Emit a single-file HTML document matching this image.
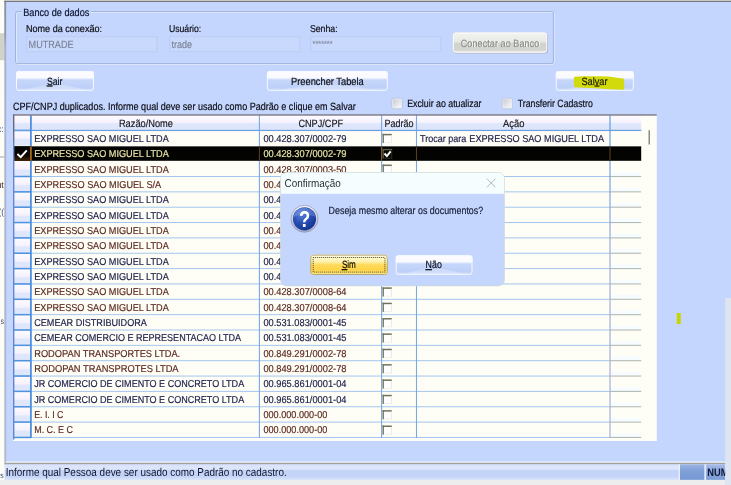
<!DOCTYPE html>
<html><head><meta charset="utf-8"><title>Confirmação</title>
<style>html,body{margin:0;padding:0;background:#c4d6fd;}body{width:731px;height:485px;overflow:hidden;position:relative;font-family:"Liberation Sans",sans-serif;}</style>
</head><body>
<svg width="737" height="491" viewBox="-3 -3 737 491" font-family="Liberation Sans, sans-serif" text-rendering="geometricPrecision" xml:space="preserve" style="display:block;position:absolute;left:-3px;top:-3px;filter:blur(0.45px)"><defs><linearGradient id="g1" x1="0" y1="0" x2="0" y2="1"><stop offset="0" stop-color="#6c6d72"/><stop offset="0.07" stop-color="#74757c"/><stop offset="0.1" stop-color="#a0a0b2"/><stop offset="1" stop-color="#aeaeb4"/></linearGradient><linearGradient id="g2" x1="0" y1="0" x2="0" y2="1"><stop offset="0" stop-color="#f3f4f0"/><stop offset="0.45" stop-color="#e7e9e4"/><stop offset="0.55" stop-color="#d1d4ce"/><stop offset="0.85" stop-color="#d2d5d0"/><stop offset="1" stop-color="#e9ebe7"/></linearGradient><linearGradient id="g3" x1="0" y1="0" x2="0" y2="1"><stop offset="0" stop-color="#fdfcff"/><stop offset="0.33" stop-color="#f9faff"/><stop offset="0.45" stop-color="#c6d7fa"/><stop offset="0.82" stop-color="#bdd0f8"/><stop offset="1" stop-color="#d0defc"/></linearGradient><linearGradient id="g4" x1="0" y1="0" x2="0" y2="1"><stop offset="0" stop-color="#fdfcff"/><stop offset="0.33" stop-color="#f9faff"/><stop offset="0.45" stop-color="#c6d7fa"/><stop offset="0.82" stop-color="#bdd0f8"/><stop offset="1" stop-color="#d0defc"/></linearGradient><linearGradient id="g5" x1="0" y1="0" x2="0" y2="1"><stop offset="0" stop-color="#fdfcff"/><stop offset="0.33" stop-color="#f9faff"/><stop offset="0.45" stop-color="#c6d7fa"/><stop offset="0.82" stop-color="#bdd0f8"/><stop offset="1" stop-color="#d0defc"/></linearGradient><linearGradient id="g6" x1="0" y1="0" x2="1" y2="1"><stop offset="0" stop-color="#c2c4c8"/><stop offset="0.5" stop-color="#e2e3e6"/><stop offset="1" stop-color="#fcfcfc"/></linearGradient><linearGradient id="g7" x1="0" y1="0" x2="1" y2="1"><stop offset="0" stop-color="#c2c4c8"/><stop offset="0.5" stop-color="#e2e3e6"/><stop offset="1" stop-color="#fcfcfc"/></linearGradient><linearGradient id="g8" x1="0" y1="0" x2="0" y2="1"><stop offset="0" stop-color="#fefbff"/><stop offset="0.46" stop-color="#f7f3fe"/><stop offset="0.56" stop-color="#dfe7fc"/><stop offset="1" stop-color="#dce5fb"/></linearGradient><linearGradient id="g9" x1="0" y1="0" x2="0" y2="1"><stop offset="0" stop-color="#fefbff"/><stop offset="0.5" stop-color="#f5f2fe"/><stop offset="0.6" stop-color="#dfe7fc"/><stop offset="1" stop-color="#dde6fc"/></linearGradient><linearGradient id="g10" x1="0" y1="0" x2="0" y2="1"><stop offset="0" stop-color="#5f9be2"/><stop offset="0.2" stop-color="#7aa4e0"/><stop offset="0.45" stop-color="#a2add6"/><stop offset="1" stop-color="#a8b0d4"/></linearGradient><linearGradient id="g11" x1="0" y1="0" x2="0" y2="1"><stop offset="0" stop-color="#020100"/><stop offset="0.55" stop-color="#070300"/><stop offset="1" stop-color="#3c2405"/></linearGradient><linearGradient id="g12" x1="0" y1="0" x2="0" y2="1"><stop offset="0" stop-color="#6b687c"/><stop offset="0.06" stop-color="#6b6a84"/><stop offset="0.1" stop-color="#6687cc"/><stop offset="1" stop-color="#6285cc"/></linearGradient><linearGradient id="g13" x1="0" y1="0" x2="0" y2="1"><stop offset="0" stop-color="#d9e3fb"/><stop offset="0.3" stop-color="#dde6fc"/><stop offset="0.42" stop-color="#c2d3f8"/><stop offset="0.8" stop-color="#c4d5f9"/><stop offset="1" stop-color="#dbe5fb"/></linearGradient><linearGradient id="g14" x1="0" y1="0" x2="0" y2="1"><stop offset="0" stop-color="#9ab3e3"/><stop offset="0.45" stop-color="#7f9fd8"/><stop offset="1" stop-color="#7699d4"/></linearGradient><linearGradient id="g15" x1="0" y1="0" x2="0" y2="1"><stop offset="0" stop-color="#a7bce8"/><stop offset="0.45" stop-color="#8aa7dc"/><stop offset="1" stop-color="#7c9cd6"/></linearGradient><linearGradient id="g16" x1="0" y1="0" x2="0" y2="1"><stop offset="0" stop-color="#f6f8fd"/><stop offset="1" stop-color="#a4aecb"/></linearGradient><radialGradient id="g17" cx="0.36" cy="0.28" r="0.85" ><stop offset="0" stop-color="#5a82d8"/><stop offset="0.45" stop-color="#2a52b6"/><stop offset="1" stop-color="#0d2d8a"/></radialGradient><linearGradient id="g18" x1="0" y1="0" x2="0" y2="1"><stop offset="0" stop-color="#fffce4"/><stop offset="0.35" stop-color="#fff2ac"/><stop offset="0.5" stop-color="#ffdb5c"/><stop offset="0.75" stop-color="#ffd347"/><stop offset="1" stop-color="#ffea92"/></linearGradient><linearGradient id="g19" x1="0" y1="0" x2="0" y2="1"><stop offset="0" stop-color="#fdfcff"/><stop offset="0.33" stop-color="#f9faff"/><stop offset="0.45" stop-color="#c6d7fa"/><stop offset="0.82" stop-color="#bdd0f8"/><stop offset="1" stop-color="#d0defc"/></linearGradient></defs>
<rect x="-3" y="-3" width="737" height="491" fill="#c4d6fd"/>
<rect x="-3" y="-3" width="7.6" height="491" fill="#fdfdf8"/>
<rect x="-3" y="33.2" width="7.6" height="27" fill="#d0d3c9"/>
<rect x="-3" y="156.4" width="7.4" height="1.2" fill="#b4b4ac"/>
<text x="-2.5" y="131.5" font-size="9" fill="#3a5a9a" textLength="6.3" lengthAdjust="spacingAndGlyphs">c:</text>
<text x="-3.5" y="187.5" font-size="9" fill="#402828" textLength="7.3" lengthAdjust="spacingAndGlyphs">ut</text>
<text x="-1.5" y="214.5" font-size="9" fill="#404a7a" textLength="5.5" lengthAdjust="spacingAndGlyphs">((</text>
<text x="0.5" y="323.8" font-size="8.5" fill="#3a4060" textLength="3.5" lengthAdjust="spacingAndGlyphs">s</text>
<rect x="4.4" y="-3" width="731" height="3.9" fill="#d4d4cc"/>
<rect x="4.4" y="0.9" width="731" height="1.1" fill="#76777a"/>
<rect x="4.5" y="0.9" width="1.3" height="461.8" fill="url(#g1)"/>
<rect x="5.8" y="1.9" width="0.7" height="460" fill="#b2c6f6"/>
<rect x="725.2" y="298" width="9" height="190" fill="#dfe4f1"/>
<rect x="676.8" y="313" width="3.9" height="11" fill="#c8d400"/>
<rect x="16.4" y="12.5" width="537.9" height="52" fill="none" rx="2" stroke="#e0e9fe" stroke-width="1"/>
<rect x="15.5" y="11.6" width="537.9" height="52" fill="none" rx="2" stroke="#a2b3da" stroke-width="1"/>
<rect x="21.6" y="6" width="69.4" height="12" fill="#c4d6fd"/>
<text x="23.2" y="15.9" font-size="10.5" fill="#0b1232" stroke="#0b1232" stroke-width="0.18" textLength="66.2" lengthAdjust="spacingAndGlyphs">Banco de dados</text>
<text x="26" y="32.1" font-size="10" fill="#0c0c12" stroke="#0c0c12" stroke-width="0.18" textLength="76" lengthAdjust="spacingAndGlyphs">Nome da conexão:</text>
<text x="168.9" y="32.1" font-size="10" fill="#0c0c12" stroke="#0c0c12" stroke-width="0.18" textLength="32.4" lengthAdjust="spacingAndGlyphs">Usuário:</text>
<text x="309.9" y="32.1" font-size="10" fill="#0c0c12" stroke="#0c0c12" stroke-width="0.18" textLength="27.8" lengthAdjust="spacingAndGlyphs">Senha:</text>
<rect x="26.5" y="36.7" width="130.4" height="15" fill="#c9d9fd" stroke="#bccdf4" stroke-width="1"/>
<rect x="169.8" y="36.7" width="130.3" height="15" fill="#c9d9fd" stroke="#bccdf4" stroke-width="1"/>
<rect x="310.7" y="36.7" width="130.1" height="15" fill="#c9d9fd" stroke="#bccdf4" stroke-width="1"/>
<text x="28.6" y="47.8" font-size="10.5" fill="#7b8294" stroke="#7b8294" stroke-width="0.15" textLength="44.9" lengthAdjust="spacingAndGlyphs">MUTRADE</text>
<text x="171.6" y="47.8" font-size="10.5" fill="#7b8294" stroke="#7b8294" stroke-width="0.15" textLength="20.4" lengthAdjust="spacingAndGlyphs">trade</text>
<text x="312.6" y="46.9" font-size="9" fill="#858da0" stroke="#858da0" stroke-width="0.1" textLength="20" lengthAdjust="spacingAndGlyphs">*******</text>
<rect x="453.6" y="33.5" width="94.3" height="20.1" fill="#a9a9cb" rx="3"/>
<rect x="452.9" y="32.6" width="94.3" height="20.1" fill="url(#g2)" rx="3"/>
<rect x="453.4" y="33.1" width="93.3" height="19.1" fill="none" rx="2.6" stroke="#fbfbf2" stroke-width="1"/>
<text x="461.4" y="47.3" font-size="10.5" fill="#ffffff" stroke="#ffffff" stroke-width="0.2" textLength="78.7" lengthAdjust="spacingAndGlyphs">Conectar ao Banco</text>
<text x="460.7" y="46.6" font-size="10.5" fill="#8b8d89" stroke="#8b8d89" stroke-width="0.2" textLength="78.7" lengthAdjust="spacingAndGlyphs">Conectar ao Banco</text>
<rect x="16" y="71.1" width="77.9" height="19.7" fill="url(#g3)" rx="2.5"/>
<path d="M25.35 90 Q54.95 79.37 84.55 90 Z" fill="#dde8fe" opacity="0.55"/>
<rect x="16.5" y="71.6" width="76.9" height="18.7" fill="none" rx="2.2" stroke="#f6f9ff" stroke-width="1"/>
<rect x="266.9" y="71.1" width="120.9" height="19.7" fill="url(#g4)" rx="2.5"/>
<path d="M281.41 90 Q327.35 79.37 373.29 90 Z" fill="#dde8fe" opacity="0.55"/>
<rect x="267.4" y="71.6" width="119.9" height="18.7" fill="none" rx="2.2" stroke="#f6f9ff" stroke-width="1"/>
<rect x="555.8" y="71.1" width="78" height="19.7" fill="url(#g5)" rx="2.5"/>
<path d="M565.16 90 Q594.8 79.37 624.44 90 Z" fill="#dde8fe" opacity="0.55"/>
<rect x="556.3" y="71.6" width="77" height="18.7" fill="none" rx="2.2" stroke="#f6f9ff" stroke-width="1"/>
<text x="46.9" y="84.5" font-size="10.5" fill="#0c0c10" stroke="#0c0c10" stroke-width="0.18" textLength="15.4" lengthAdjust="spacingAndGlyphs"><tspan text-decoration="underline">S</tspan>air</text>
<text x="291" y="84.5" font-size="10.5" fill="#0c0c10" stroke="#0c0c10" stroke-width="0.18" textLength="72.8" lengthAdjust="spacingAndGlyphs">Preencher Tabela</text>
<path d="M574.2 76.8 C 585 76.1, 600 76.2, 608 76.5 C 614 77.2, 620 78.1, 623.8 78.8 C 624.3 82, 624.3 87, 623.8 89.8 C 615 89.7, 605 88.9, 595 88.3 C 588 87.9, 580 87.5, 574.2 87.3 C 573.7 84, 573.7 80, 574.2 76.8 Z" fill="#d3da0c"/>
<text x="581.5" y="84.5" font-size="10.5" fill="#181800" stroke="#181800" stroke-width="0.18" textLength="26" lengthAdjust="spacingAndGlyphs">Sal<tspan text-decoration="underline">v</tspan>ar</text>
<text x="13" y="109.6" font-size="10.5" fill="#0c0c14" stroke="#0c0c14" stroke-width="0.18" textLength="342.7" lengthAdjust="spacingAndGlyphs">CPF/CNPJ duplicados. Informe qual deve ser usado como Padrão e clique em Salvar</text>
<rect x="392.1" y="98.4" width="9.9" height="10.1" fill="url(#g6)" rx="1"/>
<rect x="392.6" y="98.9" width="8.9" height="9.1" fill="none" rx="1" stroke="#eef1f7" stroke-width="1"/>
<rect x="391.9" y="98.2" width="10.3" height="10.5" fill="none" rx="1.2" stroke="#afb9d0" stroke-width="0.5"/>
<rect x="502.3" y="98.4" width="9.9" height="10.1" fill="url(#g7)" rx="1"/>
<rect x="502.8" y="98.9" width="8.9" height="9.1" fill="none" rx="1" stroke="#eef1f7" stroke-width="1"/>
<rect x="502.1" y="98.2" width="10.3" height="10.5" fill="none" rx="1.2" stroke="#afb9d0" stroke-width="0.5"/>
<text x="407.2" y="106.8" font-size="10.5" fill="#0c0c14" stroke="#0c0c14" stroke-width="0.18" textLength="74.3" lengthAdjust="spacingAndGlyphs">Excluir ao atualizar</text>
<text x="517.8" y="106.8" font-size="10.5" fill="#0c0c14" stroke="#0c0c14" stroke-width="0.18" textLength="75" lengthAdjust="spacingAndGlyphs">Transferir Cadastro</text>
<rect x="13" y="114.3" width="643.8" height="326.7" fill="#fefef6"/>
<rect x="14" y="115.3" width="627.2" height="15.15" fill="url(#g8)"/>
<rect x="14" y="130.45" width="16.9" height="15.35" fill="url(#g9)"/>
<rect x="14" y="145.8" width="16.9" height="15.35" fill="url(#g9)"/>
<rect x="14" y="161.15" width="16.9" height="15.35" fill="url(#g9)"/>
<rect x="14" y="176.5" width="16.9" height="15.35" fill="url(#g9)"/>
<rect x="14" y="191.85" width="16.9" height="15.35" fill="url(#g9)"/>
<rect x="14" y="207.2" width="16.9" height="15.35" fill="url(#g9)"/>
<rect x="14" y="222.55" width="16.9" height="15.35" fill="url(#g9)"/>
<rect x="14" y="237.9" width="16.9" height="15.35" fill="url(#g9)"/>
<rect x="14" y="253.25" width="16.9" height="15.35" fill="url(#g9)"/>
<rect x="14" y="268.6" width="16.9" height="15.35" fill="url(#g9)"/>
<rect x="14" y="283.95" width="16.9" height="15.35" fill="url(#g9)"/>
<rect x="14" y="299.3" width="16.9" height="15.35" fill="url(#g9)"/>
<rect x="14" y="314.65" width="16.9" height="15.35" fill="url(#g9)"/>
<rect x="14" y="330" width="16.9" height="15.35" fill="url(#g9)"/>
<rect x="14" y="345.35" width="16.9" height="15.35" fill="url(#g9)"/>
<rect x="14" y="360.7" width="16.9" height="15.35" fill="url(#g9)"/>
<rect x="14" y="376.05" width="16.9" height="15.35" fill="url(#g9)"/>
<rect x="14" y="391.4" width="16.9" height="15.35" fill="url(#g9)"/>
<rect x="14" y="406.75" width="16.9" height="15.35" fill="url(#g9)"/>
<rect x="14" y="422.1" width="16.9" height="15.35" fill="url(#g9)"/>
<rect x="610.5" y="172.3" width="30.7" height="3.8" fill="#f6fcff"/>
<rect x="610.5" y="187.65" width="30.7" height="3.8" fill="#f6fcff"/>
<rect x="610.5" y="203" width="30.7" height="3.8" fill="#f6fcff"/>
<rect x="610.5" y="218.35" width="30.7" height="3.8" fill="#f6fcff"/>
<rect x="610.5" y="233.7" width="30.7" height="3.8" fill="#f6fcff"/>
<rect x="610.5" y="249.05" width="30.7" height="3.8" fill="#f6fcff"/>
<rect x="610.5" y="264.4" width="30.7" height="3.8" fill="#f6fcff"/>
<rect x="610.5" y="279.75" width="30.7" height="3.8" fill="#f6fcff"/>
<rect x="610.5" y="295.1" width="30.7" height="3.8" fill="#f6fcff"/>
<rect x="610.5" y="310.45" width="30.7" height="3.8" fill="#f6fcff"/>
<rect x="610.5" y="325.8" width="30.7" height="3.8" fill="#f6fcff"/>
<rect x="610.5" y="341.15" width="30.7" height="3.8" fill="#f6fcff"/>
<rect x="610.5" y="356.5" width="30.7" height="3.8" fill="#f6fcff"/>
<rect x="610.5" y="371.85" width="30.7" height="3.8" fill="#f6fcff"/>
<rect x="610.5" y="387.2" width="30.7" height="3.8" fill="#f6fcff"/>
<rect x="610.5" y="402.55" width="30.7" height="3.8" fill="#f6fcff"/>
<rect x="610.5" y="417.9" width="30.7" height="3.8" fill="#f6fcff"/>
<rect x="610.5" y="433.25" width="30.7" height="3.8" fill="#f6fcff"/>
<rect x="14" y="129.95" width="596" height="1" fill="#a3c6ee"/>
<rect x="610" y="129.9" width="31.2" height="1.1" fill="#b3bab4"/>
<rect x="14" y="129.7" width="16.9" height="1.5" fill="#4f92e0"/>
<rect x="14" y="176" width="596" height="1" fill="#a3c6ee"/>
<rect x="610" y="175.95" width="31.2" height="1.1" fill="#b3bab4"/>
<rect x="14" y="175.75" width="16.9" height="1.5" fill="#4f92e0"/>
<rect x="14" y="191.35" width="596" height="1" fill="#a3c6ee"/>
<rect x="610" y="191.3" width="31.2" height="1.1" fill="#b3bab4"/>
<rect x="14" y="191.1" width="16.9" height="1.5" fill="#4f92e0"/>
<rect x="14" y="206.7" width="596" height="1" fill="#a3c6ee"/>
<rect x="610" y="206.65" width="31.2" height="1.1" fill="#b3bab4"/>
<rect x="14" y="206.45" width="16.9" height="1.5" fill="#4f92e0"/>
<rect x="14" y="222.05" width="596" height="1" fill="#a3c6ee"/>
<rect x="610" y="222" width="31.2" height="1.1" fill="#b3bab4"/>
<rect x="14" y="221.8" width="16.9" height="1.5" fill="#4f92e0"/>
<rect x="14" y="237.4" width="596" height="1" fill="#a3c6ee"/>
<rect x="610" y="237.35" width="31.2" height="1.1" fill="#b3bab4"/>
<rect x="14" y="237.15" width="16.9" height="1.5" fill="#4f92e0"/>
<rect x="14" y="252.75" width="596" height="1" fill="#a3c6ee"/>
<rect x="610" y="252.7" width="31.2" height="1.1" fill="#b3bab4"/>
<rect x="14" y="252.5" width="16.9" height="1.5" fill="#4f92e0"/>
<rect x="14" y="268.1" width="596" height="1" fill="#a3c6ee"/>
<rect x="610" y="268.05" width="31.2" height="1.1" fill="#b3bab4"/>
<rect x="14" y="267.85" width="16.9" height="1.5" fill="#4f92e0"/>
<rect x="14" y="283.45" width="596" height="1" fill="#a3c6ee"/>
<rect x="610" y="283.4" width="31.2" height="1.1" fill="#b3bab4"/>
<rect x="14" y="283.2" width="16.9" height="1.5" fill="#4f92e0"/>
<rect x="14" y="298.8" width="596" height="1" fill="#a3c6ee"/>
<rect x="610" y="298.75" width="31.2" height="1.1" fill="#b3bab4"/>
<rect x="14" y="298.55" width="16.9" height="1.5" fill="#4f92e0"/>
<rect x="14" y="314.15" width="596" height="1" fill="#a3c6ee"/>
<rect x="610" y="314.1" width="31.2" height="1.1" fill="#b3bab4"/>
<rect x="14" y="313.9" width="16.9" height="1.5" fill="#4f92e0"/>
<rect x="14" y="329.5" width="596" height="1" fill="#a3c6ee"/>
<rect x="610" y="329.45" width="31.2" height="1.1" fill="#b3bab4"/>
<rect x="14" y="329.25" width="16.9" height="1.5" fill="#4f92e0"/>
<rect x="14" y="344.85" width="596" height="1" fill="#a3c6ee"/>
<rect x="610" y="344.8" width="31.2" height="1.1" fill="#b3bab4"/>
<rect x="14" y="344.6" width="16.9" height="1.5" fill="#4f92e0"/>
<rect x="14" y="360.2" width="596" height="1" fill="#a3c6ee"/>
<rect x="610" y="360.15" width="31.2" height="1.1" fill="#b3bab4"/>
<rect x="14" y="359.95" width="16.9" height="1.5" fill="#4f92e0"/>
<rect x="14" y="375.55" width="596" height="1" fill="#a3c6ee"/>
<rect x="610" y="375.5" width="31.2" height="1.1" fill="#b3bab4"/>
<rect x="14" y="375.3" width="16.9" height="1.5" fill="#4f92e0"/>
<rect x="14" y="390.9" width="596" height="1" fill="#a3c6ee"/>
<rect x="610" y="390.85" width="31.2" height="1.1" fill="#b3bab4"/>
<rect x="14" y="390.65" width="16.9" height="1.5" fill="#4f92e0"/>
<rect x="14" y="406.25" width="596" height="1" fill="#a3c6ee"/>
<rect x="610" y="406.2" width="31.2" height="1.1" fill="#b3bab4"/>
<rect x="14" y="406" width="16.9" height="1.5" fill="#4f92e0"/>
<rect x="14" y="421.6" width="596" height="1" fill="#a3c6ee"/>
<rect x="610" y="421.55" width="31.2" height="1.1" fill="#b3bab4"/>
<rect x="14" y="421.35" width="16.9" height="1.5" fill="#4f92e0"/>
<rect x="14" y="436.95" width="596" height="1" fill="#a3c6ee"/>
<rect x="610" y="436.9" width="31.2" height="1.1" fill="#b3bab4"/>
<rect x="14" y="436.7" width="16.9" height="1.5" fill="#4f92e0"/>
<rect x="14" y="129.85" width="627.2" height="1.2" fill="#6aa0e0"/>
<rect x="30" y="115.3" width="1.8" height="322.75" fill="#4f90e0"/>
<rect x="258.85" y="115.3" width="1.1" height="322.75" fill="#78a8e6"/>
<rect x="381.05" y="115.3" width="1.1" height="322.75" fill="#78a8e6"/>
<rect x="415.95" y="115.3" width="1.1" height="322.75" fill="#78a8e6"/>
<rect x="609.4" y="115.3" width="1.2" height="322.75" fill="url(#g10)"/>
<rect x="14" y="146.35" width="627.2" height="14.45" fill="#030302"/>
<rect x="14" y="146.35" width="16.9" height="14.45" fill="url(#g11)"/>
<rect x="30" y="146.35" width="1.8" height="14.45" fill="#a4661c"/>
<rect x="258.85" y="146.35" width="1.1" height="14.45" fill="#5a3c1a"/>
<rect x="381.05" y="146.35" width="1.1" height="14.45" fill="#8a5a22"/>
<rect x="415.95" y="146.35" width="1.1" height="14.45" fill="#5a3c1a"/>
<rect x="609.45" y="146.35" width="1.1" height="14.45" fill="#5a3c1a"/>
<path d="M17.4 153.95 L20.7 157.15 L26.8 150.45" fill="none" stroke="#ffffff" stroke-width="2"/>
<rect x="13" y="114.3" width="643.8" height="1.3" fill="#6b687c"/>
<rect x="13" y="114.3" width="1.4" height="325.2" fill="url(#g12)"/>
<rect x="648.5" y="130.2" width="1.5" height="14.3" fill="#8a8a88"/>
<rect x="382.5" y="133.85" width="9.3" height="9.2" fill="#ffffff"/>
<rect x="382.5" y="133.85" width="9.3" height="1.5" fill="#72725c"/>
<rect x="382.5" y="133.85" width="1.4" height="9.2" fill="#72725c"/>
<rect x="390.9" y="135.35" width="0.9" height="7.7" fill="#e8e8e0"/>
<rect x="383.9" y="142.25" width="7.9" height="0.8" fill="#eeeee6"/>
<rect x="382.5" y="148.9" width="9.7" height="9.7" fill="#0a0a06"/>
<rect x="382.5" y="148.9" width="9.7" height="1.3" fill="#5e5e4a"/>
<rect x="382.5" y="148.9" width="1.3" height="9.7" fill="#5e5e4a"/>
<rect x="391.4" y="150.2" width="0.8" height="8.4" fill="#34342a"/>
<rect x="383.8" y="157.8" width="8.4" height="0.8" fill="#34342a"/>
<path d="M384.5 153.5 L386.9 156.1 L390.6 151.4" fill="none" stroke="#ffffff" stroke-width="1.9"/>
<rect x="382.5" y="164.55" width="9.3" height="9.2" fill="#ffffff"/>
<rect x="382.5" y="164.55" width="9.3" height="1.5" fill="#72725c"/>
<rect x="382.5" y="164.55" width="1.4" height="9.2" fill="#72725c"/>
<rect x="390.9" y="166.05" width="0.9" height="7.7" fill="#e8e8e0"/>
<rect x="383.9" y="172.95" width="7.9" height="0.8" fill="#eeeee6"/>
<rect x="382.5" y="179.9" width="9.3" height="9.2" fill="#ffffff"/>
<rect x="382.5" y="179.9" width="9.3" height="1.5" fill="#72725c"/>
<rect x="382.5" y="179.9" width="1.4" height="9.2" fill="#72725c"/>
<rect x="390.9" y="181.4" width="0.9" height="7.7" fill="#e8e8e0"/>
<rect x="383.9" y="188.3" width="7.9" height="0.8" fill="#eeeee6"/>
<rect x="382.5" y="195.25" width="9.3" height="9.2" fill="#ffffff"/>
<rect x="382.5" y="195.25" width="9.3" height="1.5" fill="#72725c"/>
<rect x="382.5" y="195.25" width="1.4" height="9.2" fill="#72725c"/>
<rect x="390.9" y="196.75" width="0.9" height="7.7" fill="#e8e8e0"/>
<rect x="383.9" y="203.65" width="7.9" height="0.8" fill="#eeeee6"/>
<rect x="382.5" y="210.6" width="9.3" height="9.2" fill="#ffffff"/>
<rect x="382.5" y="210.6" width="9.3" height="1.5" fill="#72725c"/>
<rect x="382.5" y="210.6" width="1.4" height="9.2" fill="#72725c"/>
<rect x="390.9" y="212.1" width="0.9" height="7.7" fill="#e8e8e0"/>
<rect x="383.9" y="219" width="7.9" height="0.8" fill="#eeeee6"/>
<rect x="382.5" y="225.95" width="9.3" height="9.2" fill="#ffffff"/>
<rect x="382.5" y="225.95" width="9.3" height="1.5" fill="#72725c"/>
<rect x="382.5" y="225.95" width="1.4" height="9.2" fill="#72725c"/>
<rect x="390.9" y="227.45" width="0.9" height="7.7" fill="#e8e8e0"/>
<rect x="383.9" y="234.35" width="7.9" height="0.8" fill="#eeeee6"/>
<rect x="382.5" y="241.3" width="9.3" height="9.2" fill="#ffffff"/>
<rect x="382.5" y="241.3" width="9.3" height="1.5" fill="#72725c"/>
<rect x="382.5" y="241.3" width="1.4" height="9.2" fill="#72725c"/>
<rect x="390.9" y="242.8" width="0.9" height="7.7" fill="#e8e8e0"/>
<rect x="383.9" y="249.7" width="7.9" height="0.8" fill="#eeeee6"/>
<rect x="382.5" y="256.65" width="9.3" height="9.2" fill="#ffffff"/>
<rect x="382.5" y="256.65" width="9.3" height="1.5" fill="#72725c"/>
<rect x="382.5" y="256.65" width="1.4" height="9.2" fill="#72725c"/>
<rect x="390.9" y="258.15" width="0.9" height="7.7" fill="#e8e8e0"/>
<rect x="383.9" y="265.05" width="7.9" height="0.8" fill="#eeeee6"/>
<rect x="382.5" y="272" width="9.3" height="9.2" fill="#ffffff"/>
<rect x="382.5" y="272" width="9.3" height="1.5" fill="#72725c"/>
<rect x="382.5" y="272" width="1.4" height="9.2" fill="#72725c"/>
<rect x="390.9" y="273.5" width="0.9" height="7.7" fill="#e8e8e0"/>
<rect x="383.9" y="280.4" width="7.9" height="0.8" fill="#eeeee6"/>
<rect x="382.5" y="287.35" width="9.3" height="9.2" fill="#ffffff"/>
<rect x="382.5" y="287.35" width="9.3" height="1.5" fill="#72725c"/>
<rect x="382.5" y="287.35" width="1.4" height="9.2" fill="#72725c"/>
<rect x="390.9" y="288.85" width="0.9" height="7.7" fill="#e8e8e0"/>
<rect x="383.9" y="295.75" width="7.9" height="0.8" fill="#eeeee6"/>
<rect x="382.5" y="302.7" width="9.3" height="9.2" fill="#ffffff"/>
<rect x="382.5" y="302.7" width="9.3" height="1.5" fill="#72725c"/>
<rect x="382.5" y="302.7" width="1.4" height="9.2" fill="#72725c"/>
<rect x="390.9" y="304.2" width="0.9" height="7.7" fill="#e8e8e0"/>
<rect x="383.9" y="311.1" width="7.9" height="0.8" fill="#eeeee6"/>
<rect x="382.5" y="318.05" width="9.3" height="9.2" fill="#ffffff"/>
<rect x="382.5" y="318.05" width="9.3" height="1.5" fill="#72725c"/>
<rect x="382.5" y="318.05" width="1.4" height="9.2" fill="#72725c"/>
<rect x="390.9" y="319.55" width="0.9" height="7.7" fill="#e8e8e0"/>
<rect x="383.9" y="326.45" width="7.9" height="0.8" fill="#eeeee6"/>
<rect x="382.5" y="333.4" width="9.3" height="9.2" fill="#ffffff"/>
<rect x="382.5" y="333.4" width="9.3" height="1.5" fill="#72725c"/>
<rect x="382.5" y="333.4" width="1.4" height="9.2" fill="#72725c"/>
<rect x="390.9" y="334.9" width="0.9" height="7.7" fill="#e8e8e0"/>
<rect x="383.9" y="341.8" width="7.9" height="0.8" fill="#eeeee6"/>
<rect x="382.5" y="348.75" width="9.3" height="9.2" fill="#ffffff"/>
<rect x="382.5" y="348.75" width="9.3" height="1.5" fill="#72725c"/>
<rect x="382.5" y="348.75" width="1.4" height="9.2" fill="#72725c"/>
<rect x="390.9" y="350.25" width="0.9" height="7.7" fill="#e8e8e0"/>
<rect x="383.9" y="357.15" width="7.9" height="0.8" fill="#eeeee6"/>
<rect x="382.5" y="364.1" width="9.3" height="9.2" fill="#ffffff"/>
<rect x="382.5" y="364.1" width="9.3" height="1.5" fill="#72725c"/>
<rect x="382.5" y="364.1" width="1.4" height="9.2" fill="#72725c"/>
<rect x="390.9" y="365.6" width="0.9" height="7.7" fill="#e8e8e0"/>
<rect x="383.9" y="372.5" width="7.9" height="0.8" fill="#eeeee6"/>
<rect x="382.5" y="379.45" width="9.3" height="9.2" fill="#ffffff"/>
<rect x="382.5" y="379.45" width="9.3" height="1.5" fill="#72725c"/>
<rect x="382.5" y="379.45" width="1.4" height="9.2" fill="#72725c"/>
<rect x="390.9" y="380.95" width="0.9" height="7.7" fill="#e8e8e0"/>
<rect x="383.9" y="387.85" width="7.9" height="0.8" fill="#eeeee6"/>
<rect x="382.5" y="394.8" width="9.3" height="9.2" fill="#ffffff"/>
<rect x="382.5" y="394.8" width="9.3" height="1.5" fill="#72725c"/>
<rect x="382.5" y="394.8" width="1.4" height="9.2" fill="#72725c"/>
<rect x="390.9" y="396.3" width="0.9" height="7.7" fill="#e8e8e0"/>
<rect x="383.9" y="403.2" width="7.9" height="0.8" fill="#eeeee6"/>
<rect x="382.5" y="410.15" width="9.3" height="9.2" fill="#ffffff"/>
<rect x="382.5" y="410.15" width="9.3" height="1.5" fill="#72725c"/>
<rect x="382.5" y="410.15" width="1.4" height="9.2" fill="#72725c"/>
<rect x="390.9" y="411.65" width="0.9" height="7.7" fill="#e8e8e0"/>
<rect x="383.9" y="418.55" width="7.9" height="0.8" fill="#eeeee6"/>
<rect x="382.5" y="425.5" width="9.3" height="9.2" fill="#ffffff"/>
<rect x="382.5" y="425.5" width="9.3" height="1.5" fill="#72725c"/>
<rect x="382.5" y="425.5" width="1.4" height="9.2" fill="#72725c"/>
<rect x="390.9" y="427" width="0.9" height="7.7" fill="#e8e8e0"/>
<rect x="383.9" y="433.9" width="7.9" height="0.8" fill="#eeeee6"/>
<text x="118.9" y="126.6" font-size="10.5" fill="#1a1a1e" stroke="#1a1a1e" stroke-width="0.18" textLength="54.1" lengthAdjust="spacingAndGlyphs">Razão/Nome</text>
<text x="298.4" y="126.6" font-size="10.5" fill="#1a1a1e" stroke="#1a1a1e" stroke-width="0.18" textLength="44.7" lengthAdjust="spacingAndGlyphs">CNPJ/CPF</text>
<text x="384.4" y="126.6" font-size="10.5" fill="#1a1a1e" stroke="#1a1a1e" stroke-width="0.18" textLength="29" lengthAdjust="spacingAndGlyphs">Padrão</text>
<text x="503" y="126.6" font-size="10.5" fill="#1a1a1e" stroke="#1a1a1e" stroke-width="0.18" textLength="21.4" lengthAdjust="spacingAndGlyphs">Ação</text>
<text x="34.2" y="141.8" font-size="10" fill="#20234e" stroke="#20234e" stroke-width="0.18" textLength="134.6" lengthAdjust="spacingAndGlyphs">EXPRESSO SAO MIGUEL LTDA</text>
<text x="263.4" y="141.8" font-size="10" fill="#20234e" stroke="#20234e" stroke-width="0.18" textLength="83.1" lengthAdjust="spacingAndGlyphs">00.428.307/0002-79</text>
<text x="34.2" y="157.15" font-size="10" fill="#e8e5a6" stroke="#e8e5a6" stroke-width="0.18" textLength="134.6" lengthAdjust="spacingAndGlyphs">EXPRESSO SAO MIGUEL LTDA</text>
<text x="263.4" y="157.15" font-size="10" fill="#e8e5a6" stroke="#e8e5a6" stroke-width="0.18" textLength="83.1" lengthAdjust="spacingAndGlyphs">00.428.307/0002-79</text>
<text x="34.2" y="172.5" font-size="10" fill="#5c2a20" stroke="#5c2a20" stroke-width="0.18" textLength="134.6" lengthAdjust="spacingAndGlyphs">EXPRESSO SAO MIGUEL LTDA</text>
<text x="263.4" y="172.5" font-size="10" fill="#5c2a20" stroke="#5c2a20" stroke-width="0.18" textLength="83.1" lengthAdjust="spacingAndGlyphs">00.428.307/0003-50</text>
<text x="34.2" y="187.85" font-size="10" fill="#5c2a20" stroke="#5c2a20" stroke-width="0.18" textLength="127" lengthAdjust="spacingAndGlyphs">EXPRESSO SAO MIGUEL S/A</text>
<text x="263.4" y="187.85" font-size="10" fill="#5c2a20" stroke="#5c2a20" stroke-width="0.18" textLength="83.1" lengthAdjust="spacingAndGlyphs">00.428.307/0003-50</text>
<text x="34.2" y="203.2" font-size="10" fill="#20234e" stroke="#20234e" stroke-width="0.18" textLength="134.6" lengthAdjust="spacingAndGlyphs">EXPRESSO SAO MIGUEL LTDA</text>
<text x="263.4" y="203.2" font-size="10" fill="#20234e" stroke="#20234e" stroke-width="0.18" textLength="83.1" lengthAdjust="spacingAndGlyphs">00.428.307/0004-31</text>
<text x="34.2" y="218.55" font-size="10" fill="#20234e" stroke="#20234e" stroke-width="0.18" textLength="134.6" lengthAdjust="spacingAndGlyphs">EXPRESSO SAO MIGUEL LTDA</text>
<text x="263.4" y="218.55" font-size="10" fill="#20234e" stroke="#20234e" stroke-width="0.18" textLength="83.1" lengthAdjust="spacingAndGlyphs">00.428.307/0004-31</text>
<text x="34.2" y="233.9" font-size="10" fill="#5c2a20" stroke="#5c2a20" stroke-width="0.18" textLength="134.6" lengthAdjust="spacingAndGlyphs">EXPRESSO SAO MIGUEL LTDA</text>
<text x="263.4" y="233.9" font-size="10" fill="#5c2a20" stroke="#5c2a20" stroke-width="0.18" textLength="83.1" lengthAdjust="spacingAndGlyphs">00.428.307/0005-12</text>
<text x="34.2" y="249.25" font-size="10" fill="#5c2a20" stroke="#5c2a20" stroke-width="0.18" textLength="134.6" lengthAdjust="spacingAndGlyphs">EXPRESSO SAO MIGUEL LTDA</text>
<text x="263.4" y="249.25" font-size="10" fill="#5c2a20" stroke="#5c2a20" stroke-width="0.18" textLength="83.1" lengthAdjust="spacingAndGlyphs">00.428.307/0005-12</text>
<text x="34.2" y="264.6" font-size="10" fill="#20234e" stroke="#20234e" stroke-width="0.18" textLength="134.6" lengthAdjust="spacingAndGlyphs">EXPRESSO SAO MIGUEL LTDA</text>
<text x="263.4" y="264.6" font-size="10" fill="#20234e" stroke="#20234e" stroke-width="0.18" textLength="83.1" lengthAdjust="spacingAndGlyphs">00.428.307/0007-84</text>
<text x="34.2" y="279.95" font-size="10" fill="#20234e" stroke="#20234e" stroke-width="0.18" textLength="134.6" lengthAdjust="spacingAndGlyphs">EXPRESSO SAO MIGUEL LTDA</text>
<text x="263.4" y="279.95" font-size="10" fill="#20234e" stroke="#20234e" stroke-width="0.18" textLength="83.1" lengthAdjust="spacingAndGlyphs">00.428.307/0007-84</text>
<text x="34.2" y="295.3" font-size="10" fill="#5c2a20" stroke="#5c2a20" stroke-width="0.18" textLength="134.6" lengthAdjust="spacingAndGlyphs">EXPRESSO SAO MIGUEL LTDA</text>
<text x="263.4" y="295.3" font-size="10" fill="#5c2a20" stroke="#5c2a20" stroke-width="0.18" textLength="83.1" lengthAdjust="spacingAndGlyphs">00.428.307/0008-64</text>
<text x="34.2" y="310.65" font-size="10" fill="#5c2a20" stroke="#5c2a20" stroke-width="0.18" textLength="134.6" lengthAdjust="spacingAndGlyphs">EXPRESSO SAO MIGUEL LTDA</text>
<text x="263.4" y="310.65" font-size="10" fill="#5c2a20" stroke="#5c2a20" stroke-width="0.18" textLength="83.1" lengthAdjust="spacingAndGlyphs">00.428.307/0008-64</text>
<text x="34.2" y="326" font-size="10" fill="#20234e" stroke="#20234e" stroke-width="0.18" textLength="112.7" lengthAdjust="spacingAndGlyphs">CEMEAR DISTRIBUIDORA</text>
<text x="263.4" y="326" font-size="10" fill="#20234e" stroke="#20234e" stroke-width="0.18" textLength="83.1" lengthAdjust="spacingAndGlyphs">00.531.083/0001-45</text>
<text x="34.2" y="341.35" font-size="10" fill="#20234e" stroke="#20234e" stroke-width="0.18" textLength="206.8" lengthAdjust="spacingAndGlyphs">CEMEAR COMERCIO E REPRESENTACAO LTDA</text>
<text x="263.4" y="341.35" font-size="10" fill="#20234e" stroke="#20234e" stroke-width="0.18" textLength="83.1" lengthAdjust="spacingAndGlyphs">00.531.083/0001-45</text>
<text x="34.2" y="356.7" font-size="10" fill="#5c2a20" stroke="#5c2a20" stroke-width="0.18" textLength="146" lengthAdjust="spacingAndGlyphs">RODOPAN TRANSPORTES LTDA.</text>
<text x="263.4" y="356.7" font-size="10" fill="#5c2a20" stroke="#5c2a20" stroke-width="0.18" textLength="83.1" lengthAdjust="spacingAndGlyphs">00.849.291/0002-78</text>
<text x="34.2" y="372.05" font-size="10" fill="#5c2a20" stroke="#5c2a20" stroke-width="0.18" textLength="144.4" lengthAdjust="spacingAndGlyphs">RODOPAN TRANSPROTES LTDA</text>
<text x="263.4" y="372.05" font-size="10" fill="#5c2a20" stroke="#5c2a20" stroke-width="0.18" textLength="83.1" lengthAdjust="spacingAndGlyphs">00.849.291/0002-78</text>
<text x="34.2" y="387.4" font-size="10" fill="#20234e" stroke="#20234e" stroke-width="0.18" textLength="210" lengthAdjust="spacingAndGlyphs">JR COMERCIO DE CIMENTO E CONCRETO LTDA</text>
<text x="263.4" y="387.4" font-size="10" fill="#20234e" stroke="#20234e" stroke-width="0.18" textLength="83.1" lengthAdjust="spacingAndGlyphs">00.965.861/0001-04</text>
<text x="34.2" y="402.75" font-size="10" fill="#20234e" stroke="#20234e" stroke-width="0.18" textLength="210" lengthAdjust="spacingAndGlyphs">JR COMERCIO DE CIMENTO E CONCRETO LTDA</text>
<text x="263.4" y="402.75" font-size="10" fill="#20234e" stroke="#20234e" stroke-width="0.18" textLength="83.1" lengthAdjust="spacingAndGlyphs">00.965.861/0001-04</text>
<text x="34.2" y="418.1" font-size="10" fill="#5c2a20" stroke="#5c2a20" stroke-width="0.18" textLength="29.2" lengthAdjust="spacingAndGlyphs">E. I. I C</text>
<text x="263.4" y="418.1" font-size="10" fill="#5c2a20" stroke="#5c2a20" stroke-width="0.18" textLength="64" lengthAdjust="spacingAndGlyphs">000.000.000-00</text>
<text x="34.2" y="433.45" font-size="10" fill="#5c2a20" stroke="#5c2a20" stroke-width="0.18" textLength="38.8" lengthAdjust="spacingAndGlyphs">M. C. E C</text>
<text x="263.4" y="433.45" font-size="10" fill="#5c2a20" stroke="#5c2a20" stroke-width="0.18" textLength="64" lengthAdjust="spacingAndGlyphs">000.000.000-00</text>
<text x="420" y="141.8" font-size="10" fill="#20234e" stroke="#20234e" stroke-width="0.18" textLength="46.2" lengthAdjust="spacingAndGlyphs">Trocar para</text>
<text x="469.3" y="141.8" font-size="10" fill="#20234e" stroke="#20234e" stroke-width="0.18" textLength="134.7" lengthAdjust="spacingAndGlyphs">EXPRESSO SAO MIGUEL LTDA</text>
<rect x="5.6" y="461.5" width="719.6" height="1.3" fill="#f4f7fc"/>
<rect x="4.4" y="462.8" width="720.8" height="1.6" fill="#a2a29a"/>
<rect x="5" y="464.4" width="720.2" height="15.4" fill="url(#g13)"/>
<rect x="-3" y="479.8" width="728.2" height="8.2" fill="#ecedec"/>
<rect x="678.6" y="464.4" width="1.2" height="15.4" fill="#eef2fc"/>
<rect x="680" y="464.4" width="24.4" height="15.4" fill="url(#g14)"/>
<rect x="704.6" y="464.4" width="1.4" height="15.4" fill="#e4ebfa"/>
<rect x="706.2" y="464.4" width="19" height="15.4" fill="url(#g15)"/>
<text x="5.8" y="476.3" font-size="11.5" fill="#12162a" textLength="280.9" lengthAdjust="spacingAndGlyphs">Informe qual Pessoa deve ser usado como Padrão no cadastro.</text>
<text x="707.3" y="476" font-size="11" fill="#0e1636" font-weight="700" textLength="21.2" lengthAdjust="spacingAndGlyphs">NUM</text>
<rect x="725.2" y="460" width="9" height="28" fill="#dfe4f1"/>
<text x="0.2" y="477.5" font-size="8" fill="#3a4a6a" textLength="3.4" lengthAdjust="spacingAndGlyphs">s</text>
<clipPath id="dlgclip"><rect x="280.6" y="172.4" width="223.8" height="113.4" rx="6.2"/></clipPath>
<rect x="280.2" y="172" width="224.6" height="114.2" fill="#d2d8d4" rx="6.5"/>
<g clip-path="url(#dlgclip)">
<rect x="280.6" y="172.4" width="223.8" height="113.4" fill="#c4d6fd"/>
<rect x="280.6" y="172.4" width="223.8" height="21.4" fill="#f5fdfe"/>
</g>
<text x="284.5" y="186.8" font-size="11.3" fill="#2a2e32" textLength="56.3" lengthAdjust="spacingAndGlyphs">Confirmação</text>
<path d="M486.9 178.7 L495.5 187.3 M495.5 178.7 L486.9 187.3" fill="none" stroke="#a9b4ae" stroke-width="0.9"/>
<circle cx="304.5" cy="218.8" r="13.5" fill="url(#g16)" stroke="#8890ae" stroke-width="0.7"/>
<circle cx="304.5" cy="218.8" r="11.6" fill="url(#g17)"/>
<path d="M293.3 217 A11.4 11.4 0 0 1 315.7 217 C 309.5 213.6, 299.5 213.6, 293.3 217 Z" fill="#86a4e8" opacity="0.4"/>
<text x="304.5" y="227.4" text-anchor="middle" font-weight="700" font-size="23" fill="#ffffff" transform="translate(304.5 0) scale(0.8 1) translate(-304.5 0)">?</text>
<text x="328.6" y="214.2" font-size="10.5" fill="#161c36" stroke="#161c36" stroke-width="0.18" textLength="154.6" lengthAdjust="spacingAndGlyphs">Deseja mesmo alterar os documentos?</text>
<rect x="310.3" y="254.6" width="77.5" height="20.4" fill="url(#g18)" rx="3"/>
<rect x="310.8" y="255.1" width="76.5" height="19.4" fill="none" rx="2.6" stroke="#b5a878" stroke-width="1"/>
<rect x="313.2" y="257.5" width="71.7" height="14.6" fill="none" stroke="#3a3a20" stroke-width="0.9" stroke-dasharray="1 1"/>
<text x="341.9" y="268.1" font-size="10.5" fill="#0c0c00" stroke="#0c0c00" stroke-width="0.18" textLength="14" lengthAdjust="spacingAndGlyphs"><tspan text-decoration="underline">S</tspan>im</text>
<rect x="395.7" y="255.2" width="76.8" height="19.6" fill="url(#g19)" rx="2.5"/>
<path d="M404.92 274 Q434.1 263.43 463.28 274 Z" fill="#dde8fe" opacity="0.55"/>
<rect x="396.2" y="255.7" width="75.8" height="18.6" fill="none" rx="2.2" stroke="#f6f9ff" stroke-width="1"/>
<text x="425.6" y="268.1" font-size="10.5" fill="#0c0c18" stroke="#0c0c18" stroke-width="0.18" textLength="16.2" lengthAdjust="spacingAndGlyphs"><tspan text-decoration="underline">N</tspan>ão</text>
</svg>
</body></html>
